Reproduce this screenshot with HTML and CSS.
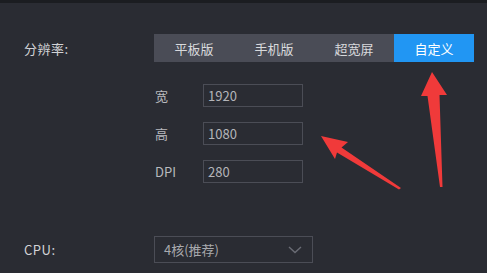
FILE: index.html
```html
<!DOCTYPE html>
<html lang="zh">
<head>
<meta charset="utf-8">
<link rel="stylesheet" href="styles.css">
</head>
<body>
<div class="topbar"></div>
<main class="panel">
  <div class="row res-row">
    <div class="label">分辨率:</div>
    <div class="seg">
      <div class="seg-item">平板版</div>
      <div class="seg-item">手机版</div>
      <div class="seg-item">超宽屏</div>
      <div class="seg-item active">自定义</div>
    </div>
  </div>
  <div class="fields">
    <div class="field"><span class="flabel">宽</span><div class="input">1920</div></div>
    <div class="field"><span class="flabel">高</span><div class="input">1080</div></div>
    <div class="field"><span class="flabel">DPI</span><div class="input">280</div></div>
  </div>
  <div class="row cpu-row">
    <div class="label">CPU:</div>
    <div class="select">
      <span>4核(推荐)</span>
      <svg class="chev" width="14" height="8" viewBox="0 0 14 8"><path d="M1 1 L7 6.5 L13 1" fill="none" stroke="#6a6c75" stroke-width="1.4"/></svg>
    </div>
  </div>
</main>
<svg class="arrows" width="487" height="273" viewBox="0 0 487 273">
  <polygon points="432,72 447,95 439.5,95 442.5,187 440,187 427.5,96 421,96" fill="#f03a3a"/>
  <polygon points="321,136 348,142 341.5,147.5 401,188 399,189.5 337,152.5 335,159" fill="#f03a3a"/>
</svg>
</body>
</html>
```
FILE: styles.css
```css
html, body {
  margin: 0;
  padding: 0;
}
body {
  width: 487px;
  height: 273px;
  overflow: hidden;
  background: #2a2c33;
  font-family: "Noto Sans CJK SC", "Noto Sans", sans-serif;
  font-size: 13px;
  color: #d2d3d6;
  position: relative;
}
.topbar {
  height: 3px;
  background: #1b1d21;
}
.panel {
  display: flex;
  flex-direction: column;
}
.row {
  display: flex;
  align-items: center;
}
.label {
  width: 130px;
  padding-left: 24px;
  box-sizing: content-box;
  letter-spacing: 0.5px;
}
.res-row {
  margin-top: 31px;
}
.seg {
  display: flex;
  height: 28px;
  width: 320px;
  background: #4a4c56;
}
.seg-item {
  flex: 1;
  display: flex;
  align-items: center;
  justify-content: center;
  color: #d8d9dc;
}
.seg-item.active {
  background: #2196f3;
  color: #ffffff;
}
.fields {
  display: flex;
  flex-direction: column;
  gap: 15px;
  margin-top: 22px;
  padding-left: 155px;
}
.field {
  display: flex;
  align-items: center;
}
.flabel {
  width: 48px;
  color: #b9babe;
}
.input {
  width: 94px;
  height: 21px;
  border: 1px solid #4b4d56;
  color: #b4b5b9;
  padding-left: 4px;
  box-sizing: content-box;
  display: flex;
  align-items: center;
  line-height: 1;
}
.cpu-row {
  margin-top: 53px;
}
.select {
  border: 1px solid #4b4d56;
  display: flex;
  align-items: center;
  justify-content: space-between;
  padding: 0 10px 0 9px;
  box-sizing: border-box;
  width: 159px;
  height: 27px;
  color: #a9aaae;
}
.chev {
  display: block;
}
.arrows {
  position: absolute;
  left: 0;
  top: 0;
  pointer-events: none;
}
```
